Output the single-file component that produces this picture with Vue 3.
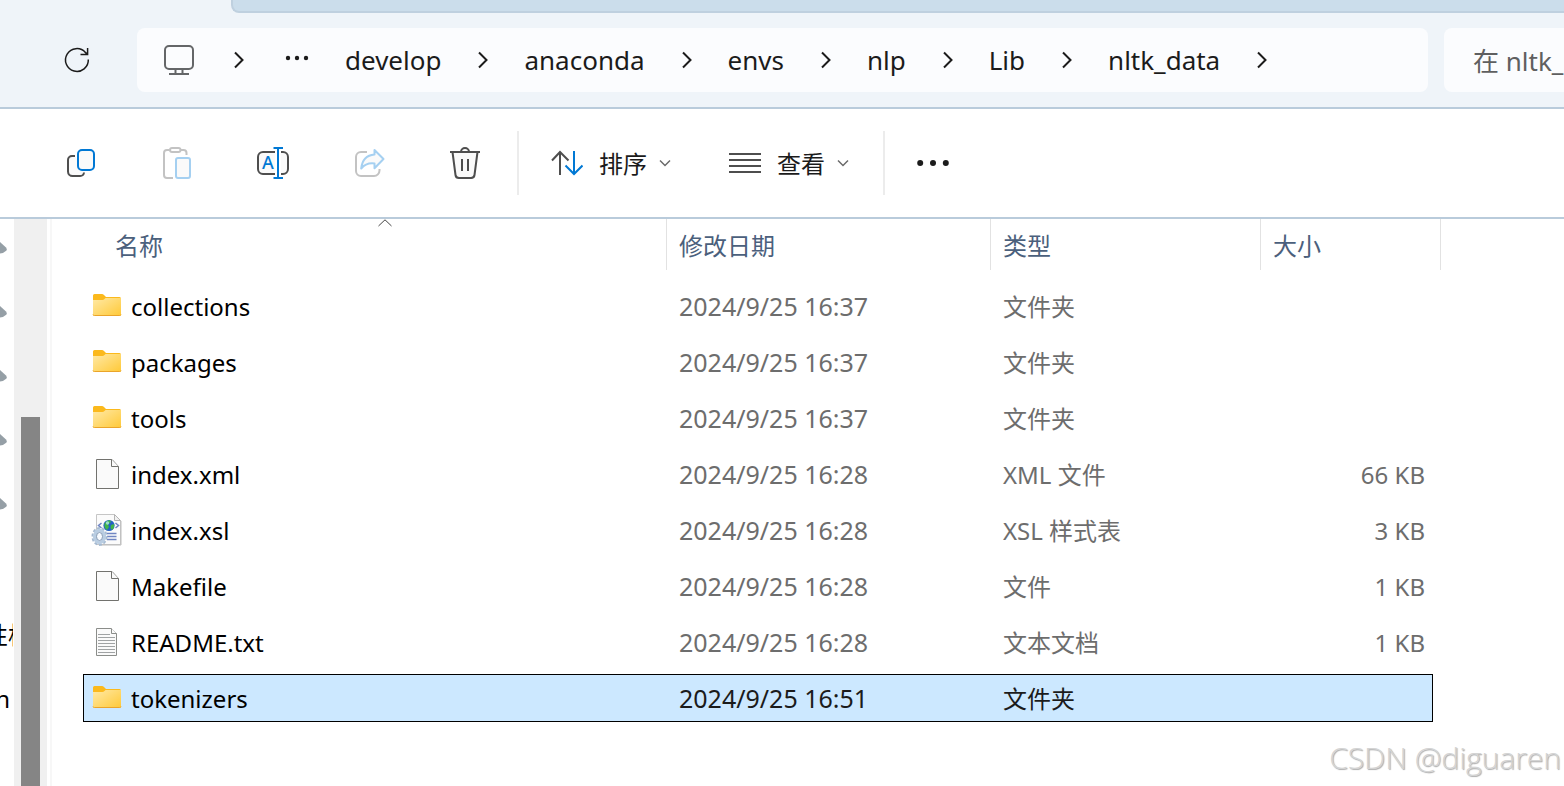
<script setup>
import { ref } from 'vue'

const crumbs = ['develop', 'anaconda', 'envs', 'nlp', 'Lib', 'nltk_data']
const selected = ref('tokenizers')
const query = ref('')
const pins = [1, 2, 3, 4, 5]

const files = [
  { name: 'collections', icon: 'folder', date: '2024/9/25 16:37', type: '文件夹', size: '' },
  { name: 'packages', icon: 'folder', date: '2024/9/25 16:37', type: '文件夹', size: '' },
  { name: 'tools', icon: 'folder', date: '2024/9/25 16:37', type: '文件夹', size: '' },
  { name: 'index.xml', icon: 'file', date: '2024/9/25 16:28', type: 'XML 文件', size: '66 KB' },
  { name: 'index.xsl', icon: 'xsl', date: '2024/9/25 16:28', type: 'XSL 样式表', size: '3 KB' },
  { name: 'Makefile', icon: 'file', date: '2024/9/25 16:28', type: '文件', size: '1 KB' },
  { name: 'README.txt', icon: 'text', date: '2024/9/25 16:28', type: '文本文档', size: '1 KB' },
  { name: 'tokenizers', icon: 'folder', date: '2024/9/25 16:51', type: '文件夹', size: '' },
]
</script>

<template>
  <div class="explorer">
    <header class="top">
      <div class="tab-strip"></div>
      <div class="nav">
        <button class="refresh" aria-label="刷新">
          <svg width="28" height="28" viewBox="0 0 28 28" fill="none" stroke="#1b1b1b" stroke-width="1.5">
            <path d="M25.3 13.5A11.4 11.4 0 1 1 22.4 6.4L24.6 8.6M24.6 2V8.6H17.5" />
          </svg>
        </button>
        <nav class="address" aria-label="路径">
          <svg class="monitor" width="30" height="30" viewBox="0 0 30 30" fill="none" stroke="#646668" stroke-width="2">
            <rect x="1" y="1" width="28" height="23" rx="4" />
            <path d="M11.5 24v5M18.5 24v5M5 29H25" stroke-linecap="butt" />
          </svg>
          <svg class="chev first" width="10" height="18" viewBox="0 0 10 18"><path d="M1 1.5L8.5 9L1 16.5" /></svg>
          <button class="more" aria-label="更多路径">
            <svg width="24" height="6" viewBox="0 0 24 6" fill="#1b1b1b">
              <circle cx="3" cy="3" r="2.2" /><circle cx="12" cy="3" r="2.2" /><circle cx="21" cy="3" r="2.2" />
            </svg>
          </button>
          <template v-for="c in crumbs" :key="c">
            <a class="crumb" href="#">{{ c }}</a>
            <svg class="chev" width="10" height="18" viewBox="0 0 10 18"><path d="M1 1.5L8.5 9L1 16.5" /></svg>
          </template>
        </nav>
        <div class="search-box">
          <input v-model="query" class="search" type="text" aria-label="搜索" placeholder="在 nltk_data 中搜索" />
        </div>
      </div>
    </header>

    <div class="toolbar" role="toolbar">
      <button class="tool" aria-label="复制">
        <svg width="32" height="32" viewBox="0 0 32 32" fill="none" stroke-width="2">
          <path d="M10 9H7a4 4 0 0 0-4 4v11.500a4.500 4.500 0 0 0 4.500 4.500H15a4 4 0 0 0 4-3.500" stroke="#4e4e4e" fill="#fafafa" />
          <rect x="13" y="3" width="16" height="20" rx="4" stroke="#0078d4" fill="#fafafa" />
        </svg>
      </button>
      <button class="tool" aria-label="粘贴" disabled>
        <svg width="32" height="32" viewBox="0 0 32 32" fill="none" stroke-width="2" stroke="#c3c3c3">
          <path d="M8.500 3H6a3 3 0 0 0-3 3V28a3 3 0 0 0 3 3h6M19.500 3H22.500a3 3 0 0 1 3 3V8" />
          <rect x="9" y="1" width="10.500" height="4" rx="2" />
          <rect x="15" y="11" width="14" height="20" rx="2" stroke="#a5d0f1" fill="#fafafa" />
        </svg>
      </button>
      <button class="tool" aria-label="重命名">
        <svg width="32" height="32" viewBox="0 0 32 32" fill="none" stroke-width="2" stroke="#4e4e4e">
          <path d="M18 5H6a5 5 0 0 0-5 5V22a5 5 0 0 0 5 5H18M24 5H26a5 5 0 0 1 5 5V22a5 5 0 0 1-5 5H24" fill="#fafafa" />
          <path d="M21 1V31M16.500 1H26M16.500 31H26" stroke="#0078d4" />
          <text x="11" y="22" text-anchor="middle" class="rename-letter">A</text>
        </svg>
      </button>
      <button class="tool" aria-label="共享" disabled>
        <svg width="32" height="32" viewBox="0 0 32 32" fill="none" stroke-width="2" stroke-linejoin="round">
          <path d="M14 5H8a5 5 0 0 0-5 5V24a5 5 0 0 0 5 5H21a5.500 5.500 0 0 0 5.500-5.500V22" stroke="#c3c3c3" />
          <path d="M21.500 3L30.500 12L21.500 21.200V16.500C16 15.800 11.500 17.500 8.200 21.500C9 14 13 8.200 21.500 7.500Z" stroke="#a5d0f1" fill="#fafafa" />
        </svg>
      </button>
      <button class="tool" aria-label="删除">
        <svg width="32" height="32" viewBox="0 0 32 32" fill="none" stroke-width="2" stroke="#4e4e4e">
          <path d="M3.500 5L6.500 28a3.500 3.500 0 0 0 3.500 3H22a3.500 3.500 0 0 0 3.500-3L28.500 5" fill="#fafafa" />
          <path d="M1 5H31M12 5a4 4 0 0 1 8 0M13 12V24M19 12V24" />
        </svg>
      </button>
      <span class="divider"></span>
      <button class="menu">
        <svg width="32" height="32" viewBox="0 0 32 32" fill="none" stroke-width="2">
          <path d="M9 28V5M1 13.500L9 5L17.500 13.500" stroke="#4e4e4e" />
          <path d="M23 4V27M14.500 18.500L23 27L31.500 18.500" stroke="#0078d4" />
        </svg>
        <span>排序</span>
        <svg class="drop" width="12" height="8" viewBox="0 0 12 8"><path d="M1 1.500L6 6.500L11 1.500" /></svg>
      </button>
      <button class="menu view">
        <svg width="32" height="32" viewBox="0 0 32 32" stroke="#4e4e4e" stroke-width="2">
          <path d="M0 7H32M0 13H32M0 19H32M0 25H32" />
        </svg>
        <span>查看</span>
        <svg class="drop" width="12" height="8" viewBox="0 0 12 8"><path d="M1 1.500L6 6.500L11 1.500" /></svg>
      </button>
      <span class="divider"></span>
      <button class="dots" aria-label="更多">
        <svg width="32" height="8" viewBox="0 0 32 8" fill="#1b1b1b">
          <circle cx="3.200" cy="4" r="3" /><circle cx="16" cy="4" r="3" /><circle cx="28.800" cy="4" r="3" />
        </svg>
      </button>
    </div>

    <div class="body">
      <aside class="side">
        <svg v-for="p in pins" :key="p" class="pin" width="8" height="64" viewBox="0 0 8 64">
          <path d="M0 23L6 28.500Q7.500 30.500 6.500 31.500Q4 34 0 34.500Z" fill="#959fa6" />
        </svg>
        <span class="side-text">性格</span>
        <span class="side-text end">n</span>
      </aside>
      <div class="scroll"><div class="thumb"></div></div>

      <main class="pane">
        <table>
          <colgroup>
            <col />
            <col class="c-date" />
            <col class="c-type" />
            <col class="c-size" />
          </colgroup>
          <thead>
            <tr>
              <th class="h-name">
                <button>
                  名称
                  <svg class="caret" width="14" height="8" viewBox="0 0 14 8" fill="none" stroke="#444"><path d="M0.500 7L7 0.800L13.500 7" /></svg>
                </button>
              </th>
              <th><button>修改日期</button></th>
              <th><button>类型</button></th>
              <th class="h-size"><button>大小</button></th>
            </tr>
          </thead>
          <tbody>
            <tr v-for="f in files" :key="f.name" :class="{ selected: f.name === selected }" @click="selected = f.name">
              <td>
                <div class="name">
                  <svg v-if="f.icon === 'folder'" width="32" height="32" viewBox="0 0 32 32">
                    <defs>
                      <linearGradient :id="'g-' + f.name" x1="0" y1="0" x2="1" y2="1">
                        <stop offset="0" stop-color="#ffe9a6" /><stop offset="1" stop-color="#ffc937" />
                      </linearGradient>
                    </defs>
                    <path d="M2 5.500Q2 4 3.500 4H11Q12 4 13 5L15 7H28.500Q30 7 30 8.500V16H2Z" fill="#fbb91c" />
                    <path d="M2 10H11.500Q12.500 10 13.500 9L14.500 8H30V24.500Q30 26 28.500 26H3.500Q2 26 2 24.500Z" :fill="'url(#g-' + f.name + ')'" />
                    <path d="M2 24.500Q2 25.500 3.500 25.500H28.500Q30 25.500 30 24.500" fill="none" stroke="#eaa42a" />
                  </svg>
                  <svg v-else-if="f.icon === 'file'" width="32" height="32" viewBox="0 0 32 32" fill="#fafafa" stroke="#72726e">
                    <path d="M5.500 1.500H21L27.500 8.500V30.500H5.500Z" />
                    <path d="M20.500 1.500V8.500H27.500" />
                  </svg>
                  <svg v-else-if="f.icon === 'text'" width="32" height="32" viewBox="0 0 32 32" fill="#fafafa" stroke="#8b8d8a">
                    <path d="M5.500 2.500H20L25.500 7.500V29.500H5.500Z" />
                    <path d="M20.500 2.500V7.500H25.500" />
                    <path d="M7 8.500H19M7 11.500H24M7 14.500H24M7 17.500H24M7 20.500H24M7 23.500H24M7 26.500H24" stroke="#a0a3a4" />
                  </svg>
                  <svg v-else width="32" height="32" viewBox="0 0 32 32" fill="none">
                    <path d="M5.500 .5H23.500L29.500 6.500V30.500H5.500Z" fill="#fbfbfb" stroke="#c6c6c6" />
                    <path d="M23.500 .5V6.500H29.500Z" fill="#f1f1f1" stroke="#b4b4b4" />
                    <path d="M30 7V31H10" stroke="#bdbdbd" />
                    <path d="M10.500 9L7.500 11.500L10.500 14M24.500 9L27.500 11.500L24.500 14" stroke="#6d84c4" stroke-width="1.500" />
                    <circle cx="18" cy="11.500" r="5.600" fill="#2463c4" />
                    <path d="M13.500 9.500Q16 6 19 6.300L20 8L17 10.500L18 13L16 16Q13 14 13.500 9.500ZM20 11L23.300 10Q23.500 14 21 16L19.500 14Z" fill="#42b649" />
                    <circle cx="16.500" cy="9" r="1.700" fill="#b8e9f6" opacity=".75" />
                    <path d="M16 19.500H25.500M16 22.500H25.500M16 25.500H25.500" stroke="#7186c2" stroke-width="1.300" />
                    <ellipse cx="8.500" cy="22.500" rx="7" ry="8.400" stroke="#a5b9d0" stroke-width="2" stroke-dasharray="3 1.800" />
                    <ellipse cx="8.500" cy="22.500" rx="4.800" ry="6" stroke="#b9cde2" stroke-width="3.600" />
                    <ellipse cx="8.500" cy="22.500" rx="3" ry="4" fill="#f8fbff" stroke="#869bb5" />
                  </svg>
                  <span>{{ f.name }}</span>
                </div>
              </td>
              <td class="date">{{ f.date }}</td>
              <td class="kind">{{ f.type }}</td>
              <td class="size">{{ f.size }}</td>
            </tr>
          </tbody>
        </table>
      </main>
    </div>
    <div class="watermark">CSDN @diguaren</div>
  </div>
</template>

<style>
body {
  margin: 0;
}
</style>

<style scoped>
.explorer {
  position: relative;
  display: flex;
  flex-direction: column;
  min-height: 100vh;
  overflow: hidden;
  background: #fff;
  color: #1b1b1b;
  font-family: "Noto Sans", "Noto Sans CJK SC", sans-serif;
  font-size: 24px;
  line-height: 32px;
}
button,
input {
  font: inherit;
  color: inherit;
  border: 0;
  padding: 0;
  margin: 0;
  background: none;
}
svg {
  display: block;
  flex: none;
}
.top {
  background: #eff4f9;
  border-bottom: 2px solid #b9cbdb;
}
.tab-strip {
  box-sizing: border-box;
  height: 13px;
  margin-left: 231px;
  background: #cbddeb;
  border: solid #bfd0df;
  border-width: 0 0 2px 2px;
  border-radius: 0 0 0 8px;
}
.nav {
  display: flex;
  padding: 15px 0;
}
.refresh {
  display: flex;
  align-items: center;
  justify-content: center;
  width: 32px;
  margin: 0 44px 0 61px;
}
.address {
  display: flex;
  flex: 1;
  min-width: 0;
  align-items: center;
  height: 64px;
  padding-left: 27px;
  background: #fbfcfe;
  border-radius: 8px;
}
.chev {
  margin: 0 36px;
  fill: none;
  stroke: #1b1b1b;
  stroke-width: 2;
}
.chev.first {
  margin: 0 41px 0 40px;
}
.more {
  margin: 0 36px 4px 0;
}
.crumb {
  padding-right: 1px;
  color: #1b1b1b;
  text-decoration: none;
  font-size: 26px;
}
.search-box {
  display: flex;
  flex: none;
  width: 120px;
  margin-left: 16px;
}
.search {
  flex: none;
  box-sizing: border-box;
  width: 320px;
  padding: 2px 0 0 29px;
  background: #fbfcfe;
  border-radius: 8px;
  outline: none;
  font-size: 26px;
}
.search::placeholder {
  color: #5f5f60;
  opacity: 1;
}
.toolbar {
  display: flex;
  align-items: center;
  height: 108px;
  padding-left: 33px;
  border-bottom: 2px solid #b9cbdb;
}
.tool {
  display: flex;
  justify-content: center;
  width: 96px;
}
.rename-letter {
  font-size: 18px;
  font-weight: 500;
  fill: #0078d4;
  stroke: none;
}
.divider {
  width: 2px;
  height: 64px;
  margin-left: 4px;
  background: #ececec;
}
.menu {
  display: flex;
  align-items: center;
  padding-left: 32px;
}
.menu span {
  padding-top: 2px;
  margin: 0 12px 0 16px;
}
.menu.view {
  margin-left: 26px;
  margin-right: 30px;
}
.drop {
  fill: none;
  stroke: #6a6a6a;
  stroke-width: 1.5;
}
.dots {
  padding-left: 32px;
}
.body {
  display: flex;
  flex: 1;
}
.side {
  display: flex;
  flex-direction: column;
  width: 13px;
  margin-right: 1px;
  overflow: hidden;
  color: #000;
}
.side-text {
  margin: 80px 0 0 -16px;
  white-space: nowrap;
}
.side-text.end {
  align-self: flex-end;
  margin: 32px 3px 0 0;
}
.scroll {
  width: 33px;
  padding-top: 198px;
  box-sizing: border-box;
  background: #f0f0f0;
  display: flex;
  justify-content: center;
}
.thumb {
  width: 19px;
  background: #858585;
}
.pane {
  flex: 1;
  min-width: 0;
  margin-left: 3px;
  padding: 0 131px 56px 31px;
  border-left: 2px solid #f7f7f7;
}
table {
  width: 100%;
  table-layout: fixed;
  border-collapse: separate;
  border-spacing: 0 8px;
  margin-top: -8px;
}
.c-date {
  width: 324px;
}
.c-type {
  width: 270px;
}
.c-size {
  width: 172px;
}
th {
  height: 55px;
  padding: 0;
  vertical-align: top;
  font-weight: 400;
}
th button {
  position: relative;
  display: block;
  box-sizing: border-box;
  width: 100%;
  height: 51px;
  padding: 2px 0 0 12px;
  border-right: 1px solid #e2e2e2;
  color: #4b607c;
  text-align: left;
}
.h-name {
  padding-left: 20px;
}
.h-size button {
  width: calc(100% + 8px);
}
.caret {
  position: absolute;
  top: 0;
  left: 50%;
  transform: translateX(-50%);
}
td {
  box-sizing: border-box;
  height: 48px;
  padding: 2px 0 0 12px;
  color: #6d6d6d;
}
td:first-child {
  padding: 0 0 0 8px;
}
.name {
  display: flex;
  align-items: center;
  gap: 8px;
  color: #000;
}
.name span {
  padding-top: 2px;
}
td.date {
  padding-top: 0;
  font-size: 25px;
}
td.size {
  padding: 2px 8px 0 0;
  text-align: right;
}
.selected {
  background: #cce8ff;
  outline: 1px solid #000;
  outline-offset: -1px;
}
.selected td {
  color: #1b1b1b;
}
.watermark {
  position: absolute;
  right: 3px;
  bottom: 8px;
  font-family: "Open Sans", sans-serif;
  font-size: 30px;
  line-height: 40px;
  font-weight: 300;
  color: #d4d4d4;
  text-shadow: 1px 1px 1px #aaa;
  pointer-events: none;
}
</style>
